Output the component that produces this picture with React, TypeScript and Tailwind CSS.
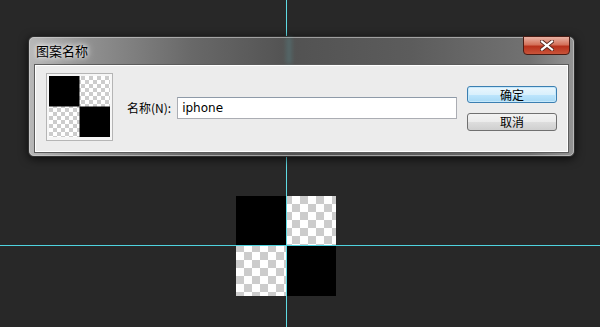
import React from "react";

function Checker({ size, cell, id }: { size: number; cell: number; id: string }) {
  return (
    <svg width={size} height={size} viewBox={`0 0 ${size} ${size}`} className="block">
      <defs>
        <pattern id={id} width={cell * 2} height={cell * 2} patternUnits="userSpaceOnUse">
          <rect width={cell * 2} height={cell * 2} fill="#ffffff" />
          <rect width={cell} height={cell} fill="#cccccc" />
          <rect x={cell} y={cell} width={cell} height={cell} fill="#cccccc" />
        </pattern>
      </defs>
      <rect width={size} height={size} fill={`url(#${id})`} />
      <rect width={size / 2} height={size / 2} fill="#000" />
      <rect x={size / 2} y={size / 2} width={size / 2} height={size / 2} fill="#000" />
    </svg>
  );
}

export default function App() {
  const cjk = "font-['Noto_Sans_CJK_SC','Noto_Sans',sans-serif]";
  return (
    <div className="relative w-[600px] h-[327px] overflow-hidden bg-[#282828]">
      {/* canvas content */}
      <div className="absolute left-[236px] top-[196px]">
        <Checker size={100} cell={8} id="big" />
      </div>
      {/* guides */}
      <div className="absolute left-[286px] top-0 h-full w-px bg-[#5fdbe4]" />
      <div className="absolute left-0 top-[245px] h-px w-full bg-[#4fd4e0]" />

      {/* dialog window */}
      <div className="absolute left-[28px] top-[36px] w-[547px] h-[121px] rounded-[6px] border border-[#2e2e2e] shadow-[0_2px_10px_rgba(0,0,0,0.7)] bg-[linear-gradient(90deg,#b8b8b8_0%,#929292_10%,#686868_30%,#525252_48%,#5c5c5c_70%,#727272_92%,#949494_100%)] flex flex-col">
        <div className="absolute inset-0 rounded-[5px] border border-[#d0d0d0]/60 pointer-events-none" />
        <div className="absolute left-[257px] top-0 w-[6px] h-[27px] bg-[#5fdbe4]/15 blur-[2px]" />
        {/* title bar */}
        <div className="relative h-[27px] flex items-center pl-[7px]">
          <span className={`${cjk} text-[13px] text-black [text-shadow:0_0_8px_#ffffff,0_0_4px_#ffffff]`}>
            图案名称
          </span>
          <button className="absolute right-[4px] -top-px w-[47px] h-[19px] rounded-b-[4px] border border-[#4a1c14] bg-[linear-gradient(180deg,#e9b2a4_0%,#d4715a_45%,#b8321c_55%,#c9543a_100%)] flex items-center justify-center">
            <svg width="14" height="11" viewBox="0 0 14 11">
              <path d="M2 1.5 L12 9.5 M12 1.5 L2 9.5" stroke="#5a2a20" strokeWidth="4" strokeLinecap="square" />
              <path d="M2 1.5 L12 9.5 M12 1.5 L2 9.5" stroke="#ffffff" strokeWidth="2.2" strokeLinecap="square" />
            </svg>
          </button>
        </div>
        {/* content panel */}
        <div className="mx-[5px] h-[89px] border border-[#5c5c5c] bg-[#ececec] shadow-[inset_0_0_0_1px_#ffffff] flex items-start">
          <div className="ml-[11px] mt-[8px] w-[67px] h-[68px] border border-[#b5b5b5] bg-[#f6f6f6] p-[2px]">
            <Checker size={61} cell={4} id="small" />
          </div>
          <div className="ml-[14px] mt-[32px] flex items-center">
            <span className={`${cjk} text-[12px] text-black`}>名称(N):</span>
            <div className="ml-[6px] w-[280px] h-[22px] border border-[#abadb3] border-t-[#8e9aa8] bg-white flex items-center pl-[4px]">
              <span className="font-['DejaVu_Sans',sans-serif] text-[12px] text-black">iphone</span>
            </div>
          </div>
          <div className="ml-[10px] mt-[21px] flex flex-col gap-[10px]">
            <button className={`${cjk} w-[90px] h-[17px] rounded-[3px] border border-[#3c7fb1] bg-[linear-gradient(180deg,#eaf6fd_0%,#d9f0fc_50%,#bee6fd_51%,#a7d9f5_100%)] shadow-[inset_0_0_0_1px_#c5e8fb] text-[12px] leading-none text-black flex items-center justify-center`}>
              确定
            </button>
            <button className={`${cjk} w-[90px] h-[18px] rounded-[3px] border border-[#707070] bg-[linear-gradient(180deg,#f2f2f2_0%,#ebebeb_50%,#dddddd_51%,#cfcfcf_100%)] text-[12px] leading-none text-black flex items-center justify-center`}>
              取消
            </button>
          </div>
        </div>
      </div>
    </div>
  );
}
